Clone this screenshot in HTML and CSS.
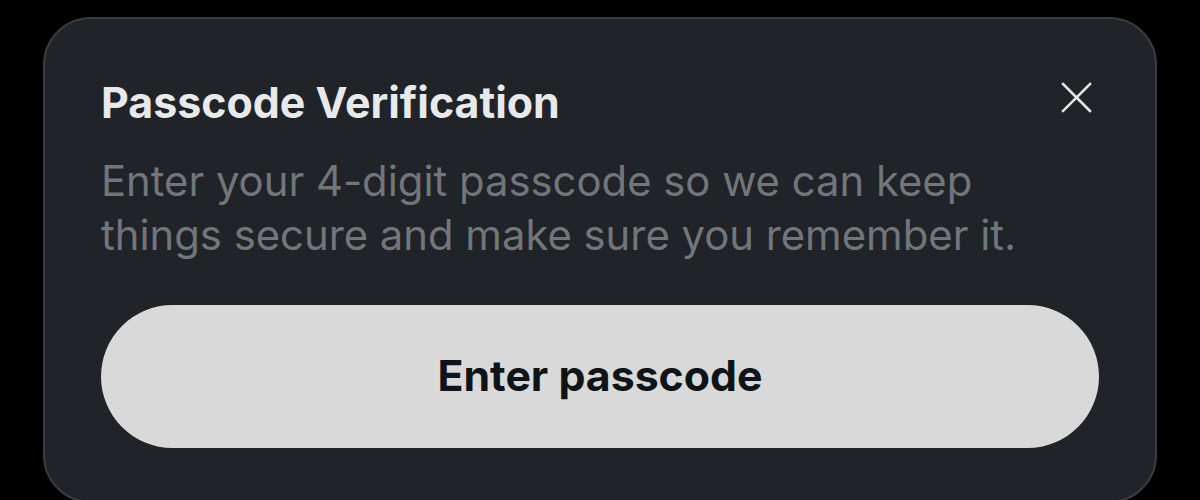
FILE: index.html
```html
<!DOCTYPE html>
<html lang="en">
<head>
<meta charset="utf-8">
<title>Passcode Verification</title>
<link rel="stylesheet" href="styles.css">
</head>
<body>
<div class="sheet">
  <div class="header">
    <h1 class="title">Passcode Verification</h1>
    <button class="close" aria-label="Close">
      <svg width="40" height="40" viewBox="0 0 40 40" aria-hidden="true">
        <path d="M7 6 L34 33 M34 6 L7 33" stroke="#e7e9ea" stroke-width="2.5" stroke-linecap="square" fill="none"/>
      </svg>
    </button>
  </div>
  <p class="desc">Enter your 4-digit passcode so we can keep things secure and make sure you remember it.</p>
  <button class="primary">Enter passcode</button>
</div>
</body>
</html>
```
FILE: styles.css
```css
* { box-sizing: border-box; }
html, body { margin: 0; height: 100%; background: #000; overflow: hidden; }
body {
  padding: 17px 43px 0;
  font-family: Inter, "Noto Sans", sans-serif;
}
.sheet {
  background: #202327;
  border: 2px solid #393c40;
  border-radius: 48px;
  height: 486px;
  padding: 57px 56px 53px;
  display: flex;
  flex-direction: column;
}
.header {
  display: flex;
  justify-content: space-between;
  align-items: flex-start;
}
.title {
  margin: 0;
  font-size: 42.9px;
  line-height: 52px;
  font-weight: 700;
  color: #e7e9ea;
}
.close {
  width: 40px;
  height: 40px;
  padding: 0;
  margin: 2px 3px 0 0;
  border: 0;
  background: transparent;
  display: flex;
}
.desc {
  margin: 26px 0 0;
  font-size: 41.8px;
  line-height: 54px;
  color: #71767b;
  font-weight: 400;
  max-width: 960px;
}
.primary {
  margin-top: 43px;
  height: 143px;
  border: 0;
  border-radius: 72px;
  background: #d9d9d9;
  color: #0f1419;
  font-family: Inter, "Noto Sans", sans-serif;
  font-size: 42.8px;
  font-weight: 700;
  padding: 0 0 2px;
  width: 100%;
}
```
